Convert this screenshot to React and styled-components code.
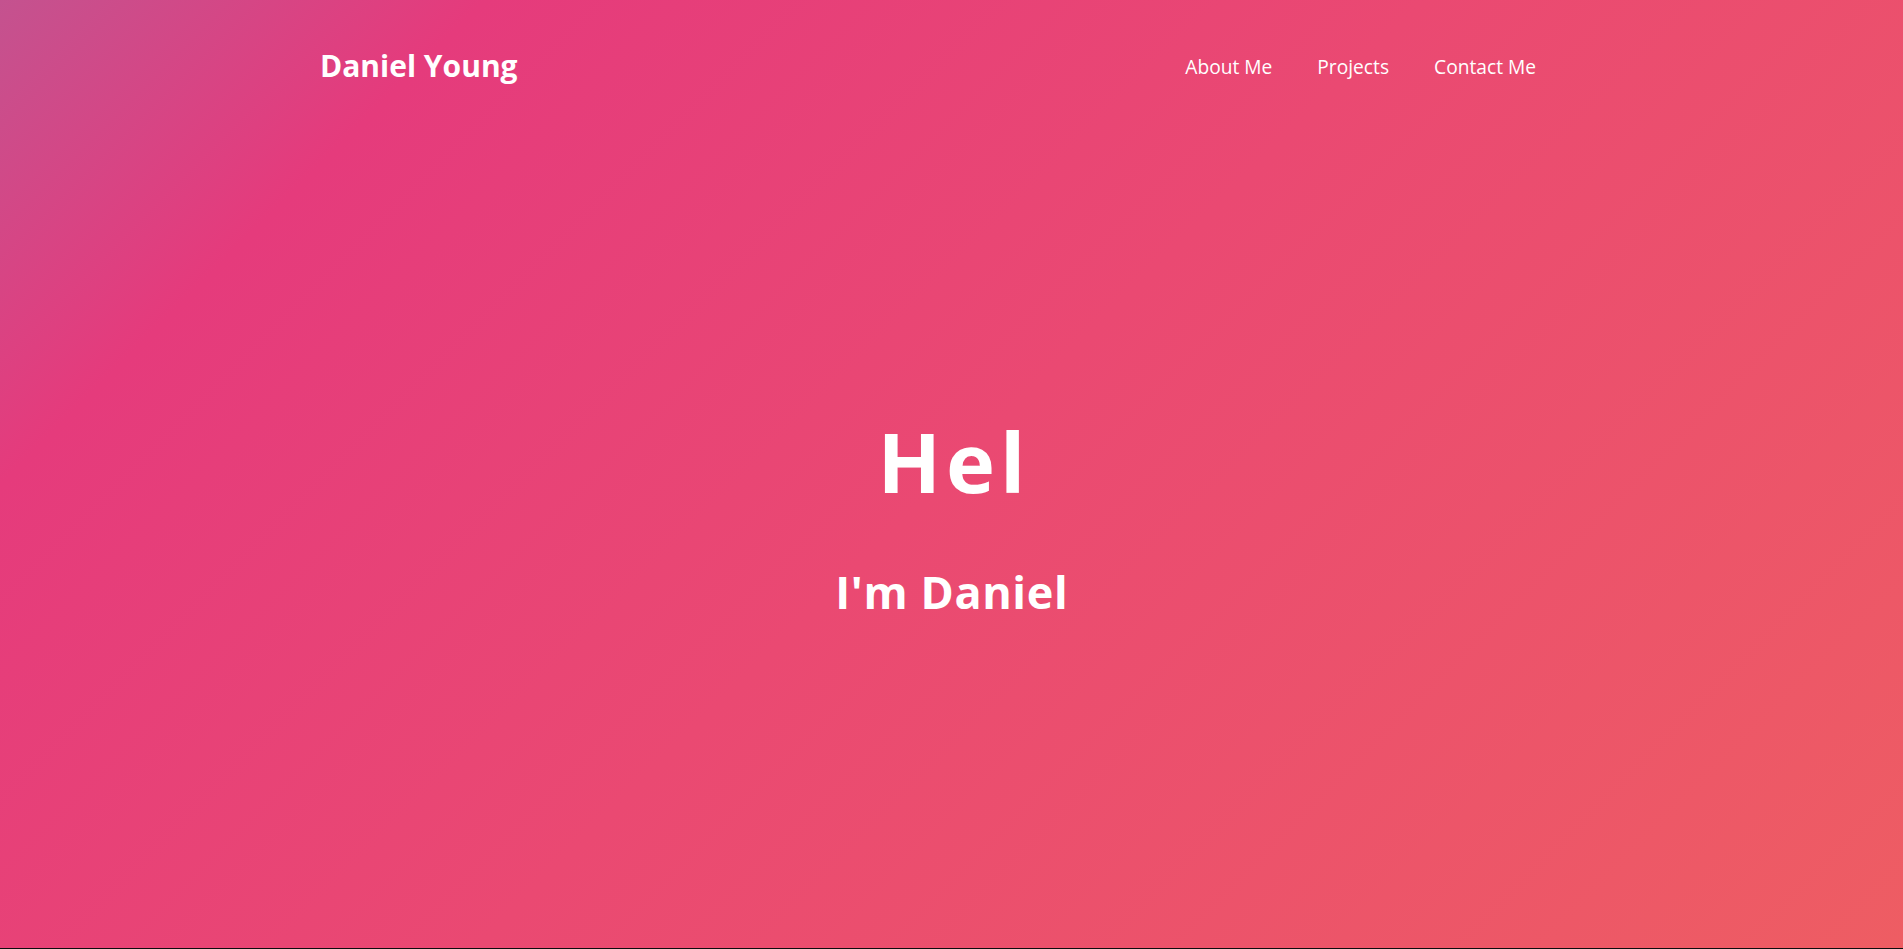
import React from "react";
import styled, { createGlobalStyle } from "styled-components";

const Global = createGlobalStyle`
  html, body { margin: 0; padding: 0; background: #0d0d0d; }
  body { font-family: "Open Sans", "Noto Sans", sans-serif; }
  * { box-sizing: border-box; }
`;

const Page = styled.div`
  height: calc(100vh - 1px);
  display: flex;
  flex-direction: column;
  background: linear-gradient(135deg, #c4528f 0%, #e53b7c 17%, #ea4972 50%, #ee5d63 100%);
  color: #fff;
`;

const Header = styled.header`
  height: 130px;
  display: flex;
  align-items: center;
  justify-content: space-between;
  padding: 0 367px 0 320px;
`;

const Logo = styled.a`
  font-size: 30px;
  font-weight: 700;
  color: #fff;
  text-decoration: none;
`;

const Nav = styled.nav`
  display: flex;
  gap: 45px;
  margin-top: 3px;
`;

const NavLink = styled.a`
  font-size: 19.2px;
  font-weight: 400;
  color: #fff;
  text-decoration: none;
`;

const Hero = styled.main`
  flex: 1;
  display: flex;
  flex-direction: column;
  align-items: center;
  justify-content: center;
  padding-bottom: 46px;
`;

const Title = styled.h1`
  margin: 0;
  padding-left: 5px;
  font-size: 83px;
  font-weight: 700;
  line-height: 1;
  letter-spacing: 5px;
`;

const Subtitle = styled.h2`
  margin: 67px 0 0;
  padding-left: 0.6px;
  font-size: 45px;
  font-weight: 700;
  line-height: 1;
  letter-spacing: 0.6px;
`;

export default function App() {
  return (
    <>
      <Global />
      <Page>
        <Header>
          <Logo href="#">Daniel Young</Logo>
          <Nav>
            <NavLink href="#">About Me</NavLink>
            <NavLink href="#">Projects</NavLink>
            <NavLink href="#">Contact Me</NavLink>
          </Nav>
        </Header>
        <Hero>
          <Title>Hel</Title>
          <Subtitle>I'm Daniel</Subtitle>
        </Hero>
      </Page>
    </>
  );
}
